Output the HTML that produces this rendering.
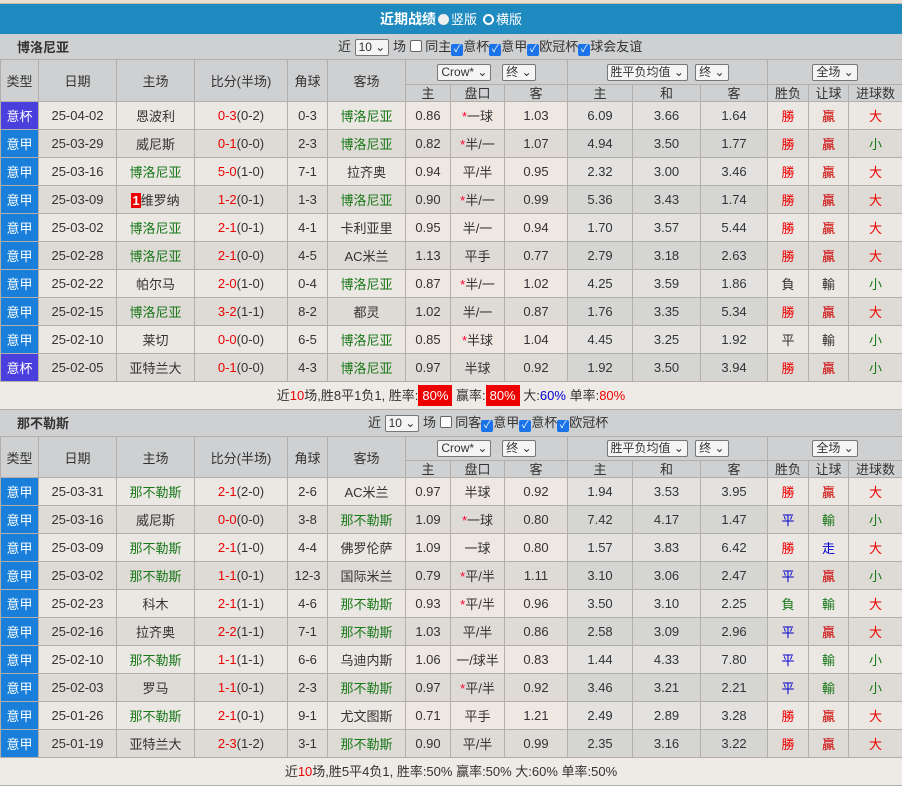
<!DOCTYPE html>
<html><head><meta charset="utf-8"><style>
*{margin:0;padding:0;box-sizing:border-box}
body{width:902px;height:766px;overflow:hidden;background:#eeeae6;font-family:"Liberation Sans","Noto Sans CJK SC",sans-serif;font-size:13px;color:#333}
.top{height:4px;background:#e9dfd0;border-bottom:1px solid #c9b9a4}
.bar{height:30px;background:#1f8abf;color:#fff;font-weight:bold;font-size:14px;text-align:center;line-height:30px}
.bar span{font-weight:normal;font-size:13px}
.rad{display:inline-block;width:11px;height:11px;border-radius:50%;vertical-align:-1px;margin:0 2px}
.ttl{height:26px;background:#cfd0d2;position:relative;line-height:26px}
.ttl b{position:absolute;left:17px;top:1px;font-size:13px;color:#333}
.ttl .ctl{position:absolute;top:0;font-size:13px}
.sel{display:inline-block;border:1px solid #777;background:#f5f5f5;border-radius:2px;height:17px;line-height:15px;padding:0 3px;font-size:12px;vertical-align:middle}
.cb{display:inline-block;width:12px;height:12px;border-radius:2px;background:#1a73e8;color:#fff;font-size:10px;line-height:12px;text-align:center;vertical-align:-1px}
.cbe{display:inline-block;width:12px;height:12px;border-radius:2px;border:1px solid #666;background:#fff;vertical-align:-1px}
table{border-collapse:collapse;table-layout:fixed;width:902px}
td{border:1px solid #b3aea9;text-align:center;height:28px;white-space:nowrap;overflow:hidden;padding:0}
.h td{background:#cfd0d2;color:#333}
.h1 td{height:25px}.h2 td{height:17px;font-size:13px;line-height:15px}
.t2b .h1 td{height:24px}
tr.o td{background:#ebe7e3}tr.e td{background:#dedad6}
tr.o td.g{background:#e3e2e1}tr.e td.g{background:#d5d5d4}
tr.o td.p{background:#efe7e2}
td.t1{background:#4a3fdd!important;color:#fff}
td.t2{background:#1a7fda!important;color:#fff}
.gr{color:#187818}.rd{color:#e00}.bl{color:#00c}.r{color:#e00}.dr{color:#c00}
.s{color:#f03}
.sum{height:28px;line-height:28px;text-align:center;background:#eeeae6;border-bottom:1px solid #b3aea9}
.bx{background:#e00;color:#fff;padding:3px 4px}
.badge{background:#e00;color:#fff;font-weight:bold;padding:0 1px}
</style></head><body>
<div class="top"></div>
<div class="bar">近期战绩<span class="rad" style="background:#eee"></span><span>竖版</span> <span class="rad" style="border:2px solid #fff;background:#1f8abf"></span><span>横版</span></div>
<div class="ttl" style="height:25px;line-height:25px"><b>博洛尼亚</b><div class="ctl" style="left:338px">近 <span class="sel">10 ⌄</span> 场 <span class="cbe"></span> 同主<span class="cb">✓</span>意杯<span class="cb">✓</span>意甲<span class="cb">✓</span>欧冠杯<span class="cb">✓</span>球会友谊</div></div>
<table>
<colgroup><col width="38"><col width="78"><col width="78"><col width="93"><col width="40"><col width="78"><col width="45"><col width="54"><col width="63"><col width="65"><col width="68"><col width="67"><col width="41"><col width="40"><col width="54"></colgroup>
<tr class="h h1"><td rowspan="2">类型</td><td rowspan="2">日期</td><td rowspan="2">主场</td><td rowspan="2">比分(半场)</td><td rowspan="2">角球</td><td rowspan="2">客场</td><td colspan="3"><span class="sel">Crow* ⌄</span> &nbsp; <span class="sel">终 ⌄</span></td><td colspan="3"><span class="sel">胜平负均值 ⌄</span> &nbsp;<span class="sel">终 ⌄</span></td><td colspan="3"><span class="sel">全场 ⌄</span></td></tr>
<tr class="h h2"><td>主</td><td>盘口</td><td>客</td><td>主</td><td>和</td><td>客</td><td>胜负</td><td>让球</td><td>进球数</td></tr>
<tr class="o"><td class="t1">意杯</td><td>25-04-02</td><td>恩波利</td><td><span class="r">0-3</span>(0-2)</td><td>0-3</td><td class="gr">博洛尼亚</td><td class="p">0.86</td><td class="p"><span class="s">*</span>一球</td><td class="p">1.03</td><td class="g">6.09</td><td class="g">3.66</td><td class="g">1.64</td><td class="rd">勝</td><td class="dr">贏</td><td class="rd">大</td></tr>
<tr class="e"><td class="t2">意甲</td><td>25-03-29</td><td>威尼斯</td><td><span class="r">0-1</span>(0-0)</td><td>2-3</td><td class="gr">博洛尼亚</td><td class="p">0.82</td><td class="p"><span class="s">*</span>半/一</td><td class="p">1.07</td><td class="g">4.94</td><td class="g">3.50</td><td class="g">1.77</td><td class="rd">勝</td><td class="dr">贏</td><td class="gr">小</td></tr>
<tr class="o"><td class="t2">意甲</td><td>25-03-16</td><td class="gr">博洛尼亚</td><td><span class="r">5-0</span>(1-0)</td><td>7-1</td><td>拉齐奥</td><td class="p">0.94</td><td class="p">平/半</td><td class="p">0.95</td><td class="g">2.32</td><td class="g">3.00</td><td class="g">3.46</td><td class="rd">勝</td><td class="dr">贏</td><td class="rd">大</td></tr>
<tr class="e"><td class="t2">意甲</td><td>25-03-09</td><td><span class="badge">1</span>维罗纳</td><td><span class="r">1-2</span>(0-1)</td><td>1-3</td><td class="gr">博洛尼亚</td><td class="p">0.90</td><td class="p"><span class="s">*</span>半/一</td><td class="p">0.99</td><td class="g">5.36</td><td class="g">3.43</td><td class="g">1.74</td><td class="rd">勝</td><td class="dr">贏</td><td class="rd">大</td></tr>
<tr class="o"><td class="t2">意甲</td><td>25-03-02</td><td class="gr">博洛尼亚</td><td><span class="r">2-1</span>(0-1)</td><td>4-1</td><td>卡利亚里</td><td class="p">0.95</td><td class="p">半/一</td><td class="p">0.94</td><td class="g">1.70</td><td class="g">3.57</td><td class="g">5.44</td><td class="rd">勝</td><td class="dr">贏</td><td class="rd">大</td></tr>
<tr class="e"><td class="t2">意甲</td><td>25-02-28</td><td class="gr">博洛尼亚</td><td><span class="r">2-1</span>(0-0)</td><td>4-5</td><td>AC米兰</td><td class="p">1.13</td><td class="p">平手</td><td class="p">0.77</td><td class="g">2.79</td><td class="g">3.18</td><td class="g">2.63</td><td class="rd">勝</td><td class="dr">贏</td><td class="rd">大</td></tr>
<tr class="o"><td class="t2">意甲</td><td>25-02-22</td><td>帕尔马</td><td><span class="r">2-0</span>(1-0)</td><td>0-4</td><td class="gr">博洛尼亚</td><td class="p">0.87</td><td class="p"><span class="s">*</span>半/一</td><td class="p">1.02</td><td class="g">4.25</td><td class="g">3.59</td><td class="g">1.86</td><td>負</td><td>輸</td><td class="gr">小</td></tr>
<tr class="e"><td class="t2">意甲</td><td>25-02-15</td><td class="gr">博洛尼亚</td><td><span class="r">3-2</span>(1-1)</td><td>8-2</td><td>都灵</td><td class="p">1.02</td><td class="p">半/一</td><td class="p">0.87</td><td class="g">1.76</td><td class="g">3.35</td><td class="g">5.34</td><td class="rd">勝</td><td class="dr">贏</td><td class="rd">大</td></tr>
<tr class="o"><td class="t2">意甲</td><td>25-02-10</td><td>莱切</td><td><span class="r">0-0</span>(0-0)</td><td>6-5</td><td class="gr">博洛尼亚</td><td class="p">0.85</td><td class="p"><span class="s">*</span>半球</td><td class="p">1.04</td><td class="g">4.45</td><td class="g">3.25</td><td class="g">1.92</td><td>平</td><td>輸</td><td class="gr">小</td></tr>
<tr class="e"><td class="t1">意杯</td><td>25-02-05</td><td>亚特兰大</td><td><span class="r">0-1</span>(0-0)</td><td>4-3</td><td class="gr">博洛尼亚</td><td class="p">0.97</td><td class="p">半球</td><td class="p">0.92</td><td class="g">1.92</td><td class="g">3.50</td><td class="g">3.94</td><td class="rd">勝</td><td class="dr">贏</td><td class="gr">小</td></tr>
</table>
<div class="sum">近<span class="r">10</span>场,胜8平1负1, 胜率:<span class="bx">80%</span> 赢率:<span class="bx">80%</span> 大:<span class="bl">60%</span> 单率:<span class="r">80%</span></div>
<div class="ttl"><b>那不勒斯</b><div class="ctl" style="left:368px">近 <span class="sel">10 ⌄</span> 场 <span class="cbe"></span> 同客<span class="cb">✓</span>意甲<span class="cb">✓</span>意杯<span class="cb">✓</span>欧冠杯</div></div>
<table class="t2b">
<colgroup><col width="38"><col width="78"><col width="78"><col width="93"><col width="40"><col width="78"><col width="45"><col width="54"><col width="63"><col width="65"><col width="68"><col width="67"><col width="41"><col width="40"><col width="54"></colgroup>
<tr class="h h1"><td rowspan="2">类型</td><td rowspan="2">日期</td><td rowspan="2">主场</td><td rowspan="2">比分(半场)</td><td rowspan="2">角球</td><td rowspan="2">客场</td><td colspan="3"><span class="sel">Crow* ⌄</span> &nbsp; <span class="sel">终 ⌄</span></td><td colspan="3"><span class="sel">胜平负均值 ⌄</span> &nbsp;<span class="sel">终 ⌄</span></td><td colspan="3"><span class="sel">全场 ⌄</span></td></tr>
<tr class="h h2"><td>主</td><td>盘口</td><td>客</td><td>主</td><td>和</td><td>客</td><td>胜负</td><td>让球</td><td>进球数</td></tr>
<tr class="o"><td class="t2">意甲</td><td>25-03-31</td><td class="gr">那不勒斯</td><td><span class="r">2-1</span>(2-0)</td><td>2-6</td><td>AC米兰</td><td class="p">0.97</td><td class="p">半球</td><td class="p">0.92</td><td class="g">1.94</td><td class="g">3.53</td><td class="g">3.95</td><td class="rd">勝</td><td class="dr">贏</td><td class="rd">大</td></tr>
<tr class="e"><td class="t2">意甲</td><td>25-03-16</td><td>威尼斯</td><td><span class="r">0-0</span>(0-0)</td><td>3-8</td><td class="gr">那不勒斯</td><td class="p">1.09</td><td class="p"><span class="s">*</span>一球</td><td class="p">0.80</td><td class="g">7.42</td><td class="g">4.17</td><td class="g">1.47</td><td class="bl">平</td><td class="gr">輸</td><td class="gr">小</td></tr>
<tr class="o"><td class="t2">意甲</td><td>25-03-09</td><td class="gr">那不勒斯</td><td><span class="r">2-1</span>(1-0)</td><td>4-4</td><td>佛罗伦萨</td><td class="p">1.09</td><td class="p">一球</td><td class="p">0.80</td><td class="g">1.57</td><td class="g">3.83</td><td class="g">6.42</td><td class="rd">勝</td><td class="bl">走</td><td class="rd">大</td></tr>
<tr class="e"><td class="t2">意甲</td><td>25-03-02</td><td class="gr">那不勒斯</td><td><span class="r">1-1</span>(0-1)</td><td>12-3</td><td>国际米兰</td><td class="p">0.79</td><td class="p"><span class="s">*</span>平/半</td><td class="p">1.11</td><td class="g">3.10</td><td class="g">3.06</td><td class="g">2.47</td><td class="bl">平</td><td class="dr">贏</td><td class="gr">小</td></tr>
<tr class="o"><td class="t2">意甲</td><td>25-02-23</td><td>科木</td><td><span class="r">2-1</span>(1-1)</td><td>4-6</td><td class="gr">那不勒斯</td><td class="p">0.93</td><td class="p"><span class="s">*</span>平/半</td><td class="p">0.96</td><td class="g">3.50</td><td class="g">3.10</td><td class="g">2.25</td><td class="gr">負</td><td class="gr">輸</td><td class="rd">大</td></tr>
<tr class="e"><td class="t2">意甲</td><td>25-02-16</td><td>拉齐奥</td><td><span class="r">2-2</span>(1-1)</td><td>7-1</td><td class="gr">那不勒斯</td><td class="p">1.03</td><td class="p">平/半</td><td class="p">0.86</td><td class="g">2.58</td><td class="g">3.09</td><td class="g">2.96</td><td class="bl">平</td><td class="dr">贏</td><td class="rd">大</td></tr>
<tr class="o"><td class="t2">意甲</td><td>25-02-10</td><td class="gr">那不勒斯</td><td><span class="r">1-1</span>(1-1)</td><td>6-6</td><td>乌迪内斯</td><td class="p">1.06</td><td class="p">一/球半</td><td class="p">0.83</td><td class="g">1.44</td><td class="g">4.33</td><td class="g">7.80</td><td class="bl">平</td><td class="gr">輸</td><td class="gr">小</td></tr>
<tr class="e"><td class="t2">意甲</td><td>25-02-03</td><td>罗马</td><td><span class="r">1-1</span>(0-1)</td><td>2-3</td><td class="gr">那不勒斯</td><td class="p">0.97</td><td class="p"><span class="s">*</span>平/半</td><td class="p">0.92</td><td class="g">3.46</td><td class="g">3.21</td><td class="g">2.21</td><td class="bl">平</td><td class="gr">輸</td><td class="gr">小</td></tr>
<tr class="o"><td class="t2">意甲</td><td>25-01-26</td><td class="gr">那不勒斯</td><td><span class="r">2-1</span>(0-1)</td><td>9-1</td><td>尤文图斯</td><td class="p">0.71</td><td class="p">平手</td><td class="p">1.21</td><td class="g">2.49</td><td class="g">2.89</td><td class="g">3.28</td><td class="rd">勝</td><td class="dr">贏</td><td class="rd">大</td></tr>
<tr class="e"><td class="t2">意甲</td><td>25-01-19</td><td>亚特兰大</td><td><span class="r">2-3</span>(1-2)</td><td>3-1</td><td class="gr">那不勒斯</td><td class="p">0.90</td><td class="p">平/半</td><td class="p">0.99</td><td class="g">2.35</td><td class="g">3.16</td><td class="g">3.22</td><td class="rd">勝</td><td class="dr">贏</td><td class="rd">大</td></tr>
</table>
<div class="sum">近<span class="r">10</span>场,胜5平4负1, 胜率:50% 赢率:50% 大:60% 单率:50%</div>
</body></html>
